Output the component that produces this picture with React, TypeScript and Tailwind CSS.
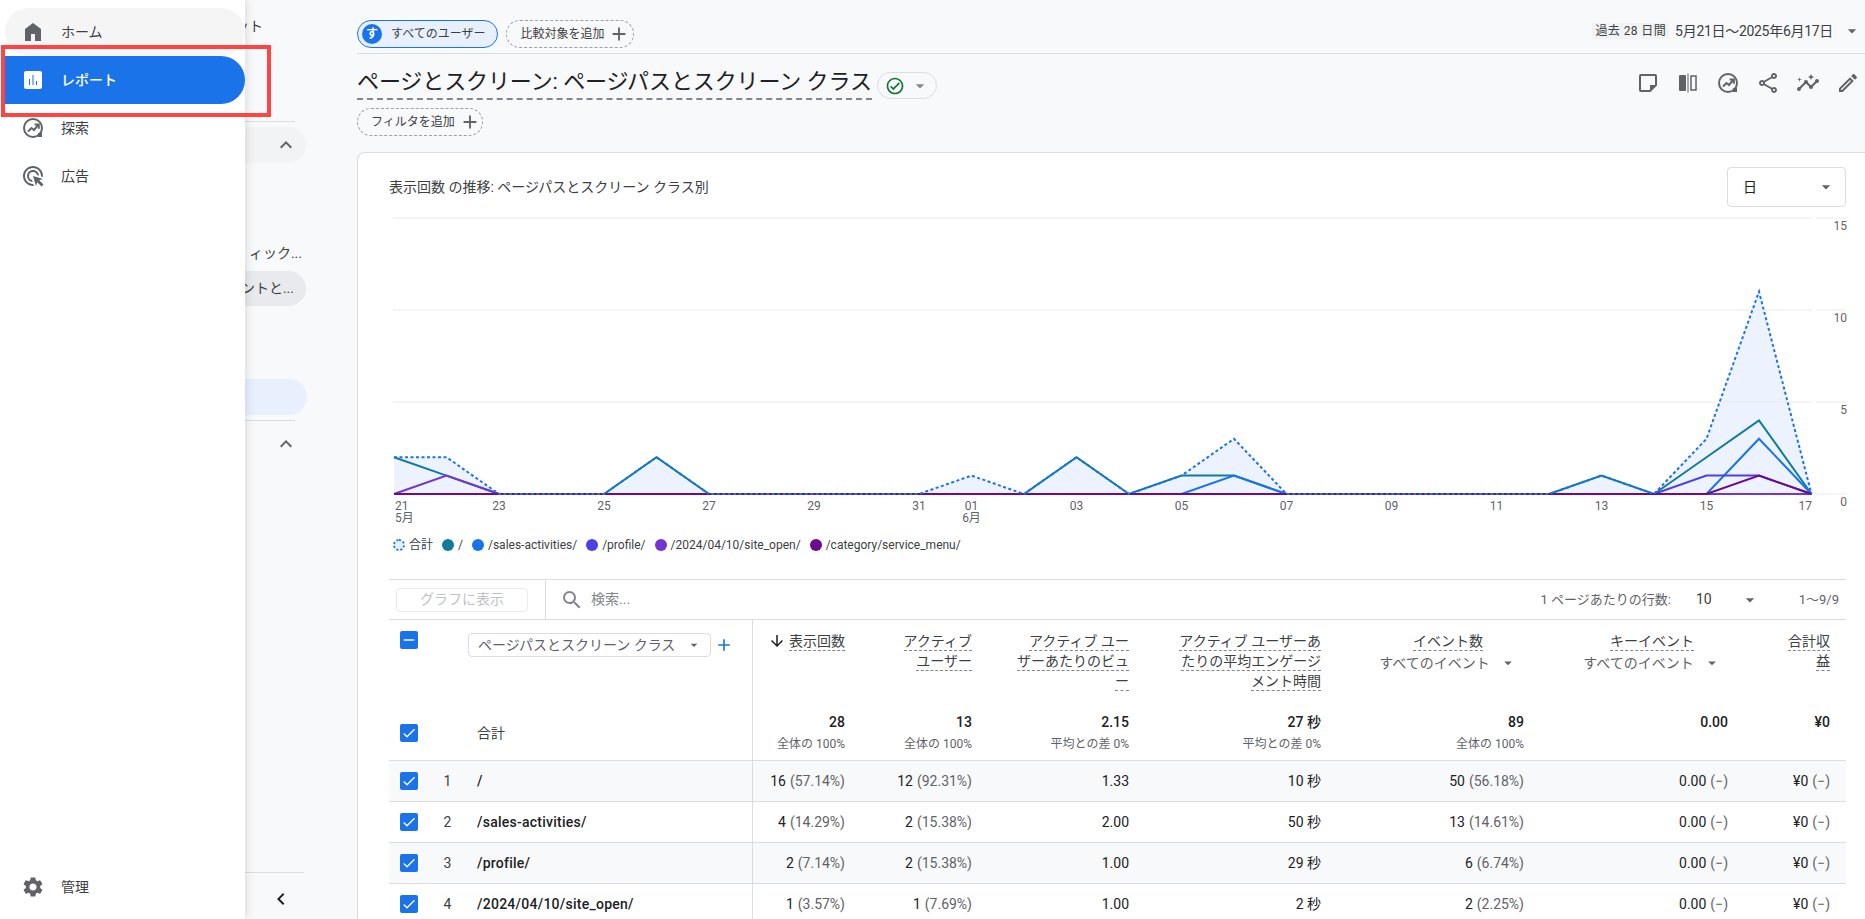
import React from "react";
import {
  MdAdd,
  MdAdsClick,
  MdArrowDownward,
  MdArrowDropDown,
  MdCheck,
  MdChevronLeft,
  MdExpandLess,
  MdOutlineCheckCircle,
  MdOutlineEdit,
  MdOutlineInsights,
  MdOutlineShare,
  MdRemove,
  MdSearch,
  MdSettings,
} from "react-icons/md";

function ExploreIcon({ color }: { color: string }) {
  return (
    <svg width="24" height="24" viewBox="0 0 24 24" fill="none">
      <circle cx="12" cy="12" r="9" stroke={color} strokeWidth="2" />
      <path d="M17 21h4v-4h-4z" fill={color} />
      <path d="M7 15.5l3.5-3.5 2.5 2 4-4.8" stroke={color} strokeWidth="2" />
      <path d="M13.6 8.6h4.2v4.2" stroke={color} strokeWidth="2" />
    </svg>
  );
}

function CompareIcon() {
  return (
    <svg width="24" height="24" viewBox="0 0 24 24" fill="none">
      <rect x="3" y="4" width="7" height="16" rx="1" fill="#5f6368" />
      <rect x="11.500" y="2.500" width="1" height="19" fill="#5f6368" />
      <rect x="15" y="5" width="5" height="14" stroke="#5f6368" strokeWidth="1.5" />
    </svg>
  );
}

function NoteIcon() {
  return (
    <svg width="24" height="24" viewBox="0 0 24 24" fill="none">
      <path
        d="M5 4h14a1 1 0 0 1 1 1v9l-6 6H5a1 1 0 0 1-1-1V5a1 1 0 0 1 1-1z"
        stroke="#5f6368"
        strokeWidth="2"
      />
      <path d="M14 14h6l-6 6z" fill="#5f6368" />
    </svg>
  );
}

function ReportIcon() {
  return (
    <svg width="24" height="24" viewBox="0 0 24 24">
      <path
        fill="#ffffff"
        fillRule="evenodd"
        d="M19 3H5c-1.100 0-2 .9-2 2v14c0 1.100.9 2 2 2h14c1.100 0 2-.9 2-2V5c0-1.100-.9-2-2-2zM9 17H8v-6h1v6zm3.500 0h-1V7h1v10zm3.500 0h-1v-4h1v4z"
      />
    </svg>
  );
}

function HomeIcon() {
  return (
    <svg width="24" height="24" viewBox="0 0 24 24">
      <path fill="#5f6368" d="M4 21V9l8-6 8 6v12h-6v-7h-4v7z" />
    </svg>
  );
}

function Checkbox({ minus }: { minus?: boolean }) {
  return (
    <div className="w-[18px] h-[18px] rounded-[2px] bg-[#1a73e8] flex items-center justify-center shrink-0">
      {minus ? <MdRemove size={18} color="#ffffff" /> : <MdCheck size={16} color="#ffffff" />}
    </div>
  );
}

const N = 28;
const pad = (m: Record<number, number>) => Array.from({ length: N }, (_, i) => m[i] ?? 0);
const X = (i: number) => 5 + 52.5 * i;
const Y = (v: number) => 282 - 18.4 * v;
const pts = (d: number[]) => d.map((v, i) => `${X(i)},${Y(v)}`).join(" ");

const total = pad({ 0: 2, 1: 2, 5: 2, 11: 1, 13: 2, 15: 1, 16: 3, 23: 1, 25: 3, 26: 11 });
const series: { color: string; data: number[] }[] = [
  { color: "#12799f", data: pad({ 0: 2, 1: 1, 5: 2, 13: 2, 15: 1, 16: 1, 23: 1, 25: 2, 26: 4 }) },
  { color: "#1a73e8", data: pad({ 16: 1, 26: 3 }) },
  { color: "#4b40e8", data: pad({ 25: 1, 26: 1 }) },
  { color: "#7434d2", data: pad({ 1: 1 }) },
  { color: "#6e0a90", data: pad({ 26: 1 }) },
];

const xLabels: [number, string][] = [
  [2, "23"],
  [4, "25"],
  [6, "27"],
  [8, "29"],
  [10, "31"],
  [11, "01"],
  [13, "03"],
  [15, "05"],
  [17, "07"],
  [19, "09"],
  [21, "11"],
  [23, "13"],
  [25, "15"],
];

function Chart() {
  const grid = [6, 98, 190, 282];
  const labels: [number, string][] = [
    [18, "15"],
    [110, "10"],
    [202, "5"],
    [294, "0"],
  ];
  const t = { fontSize: 12, fill: "#5f6368" };
  return (
    <svg width="1457" height="320" viewBox="0 0 1457 320" className="block overflow-visible">
      <polygon points={`${X(0)},${Y(0)} ${pts(total)} ${X(27)},${Y(0)}`} fill="#ecf3fe" />
      {grid.map((y) => (
        <g key={y}>
          <line x1="4" x2="1423" y1={y} y2={y} stroke="#e8eaed" />
          <line x1="1427" x2="1457" y1={y} y2={y} stroke="#e8eaed" />
        </g>
      ))}
      {series.map((s) => (
        <polyline key={s.color} points={pts(s.data)} fill="none" stroke={s.color} strokeWidth="2" />
      ))}
      <polyline points={pts(total)} fill="none" stroke="#1a73e8" strokeWidth="2" strokeDasharray="3 2.500" />
      {labels.map(([y, s]) => (
        <text key={s} x="1458" y={y} textAnchor="end" {...t}>
          {s}
        </text>
      ))}
      <text x="6" y="298" {...t}>21</text>
      <text x="6" y="310" {...t}>5月</text>
      {xLabels.map(([i, s]) => (
        <text key={s} x={X(i)} y="298" textAnchor="middle" {...t}>
          {s}
        </text>
      ))}
      <text x={X(11)} y="310" textAnchor="middle" {...t}>6月</text>
      <text x="1423" y="298" textAnchor="end" {...t}>17</text>
    </svg>
  );
}

const legend = [
  { c: "#12799f", t: "/" },
  { c: "#1a73e8", t: "/sales-activities/" },
  { c: "#4b40e8", t: "/profile/" },
  { c: "#7434d2", t: "/2024/04/10/site_open/" },
  { c: "#6e0a90", t: "/category/service_menu/" },
];

function HeadLine({ children }: { children: React.ReactNode }) {
  return (
    <span className="block h-[20px] leading-[20px] border-b border-dashed border-[#80868b] whitespace-nowrap text-[#3c4043]">
      {children}
    </span>
  );
}

function Val({ a, b }: { a: string; b?: string }) {
  return (
    <div className="pr-4 flex items-center justify-end whitespace-nowrap">
      <span className="text-[#202124]">{a}</span>
      {b && <span className="text-[#5f6368] ml-1">{b}</span>}
    </div>
  );
}

function Tot({ a, b }: { a: string; b?: string }) {
  return (
    <div className="pr-4 pt-[6px] flex flex-col items-end whitespace-nowrap">
      <span className="h-5 leading-5 font-medium text-[#202124]">{a}</span>
      {b && <span className="mt-1 h-4 leading-4 text-[12px] text-[#5f6368]">{b}</span>}
    </div>
  );
}

const rows = [
  ["1", "/", "16", "(57.14%)", "12", "(92.31%)", "1.33", "10 秒", "50", "(56.18%)"],
  ["2", "/sales-activities/", "4", "(14.29%)", "2", "(15.38%)", "2.00", "50 秒", "13", "(14.61%)"],
  ["3", "/profile/", "2", "(7.14%)", "2", "(15.38%)", "1.00", "29 秒", "6", "(6.74%)"],
  ["4", "/2024/04/10/site_open/", "1", "(3.57%)", "1", "(7.69%)", "1.00", "2 秒", "2", "(2.25%)"],
];

function NavItem({ icon, label, cls, labelCls }: { icon: React.ReactNode; label: string; cls?: string; labelCls?: string }) {
  return (
    <div className={`h-12 flex items-center pl-4 ${cls ?? ""}`}>
      <div className="w-6 h-6 shrink-0">{icon}</div>
      <span className={labelCls ?? "ml-4 text-[#3c4043]"}>{label}</span>
    </div>
  );
}

export default function App() {
  return (
    <div className="relative w-[1865px] h-[919px] overflow-hidden flex bg-[#f8f9fa] text-[14px] text-[#202124] [font-family:Roboto,'Noto_Sans_CJK_JP',sans-serif]">
      {/* primary navigation */}
      <aside className="relative z-10 w-[245px] shrink-0 bg-white pl-[5px] pt-2 pb-2 flex flex-col shadow-[2px_0_8px_rgba(60,64,67,0.15)]">
        <NavItem icon={<HomeIcon />} label="ホーム" cls="rounded-full bg-[#f5f5f5]" />
        <NavItem
          icon={<ReportIcon />}
          label="レポート"
          cls="rounded-r-full bg-[#1a73e8]"
          labelCls="ml-4 text-white font-medium"
        />
        <NavItem icon={<ExploreIcon color="#5f6368" />} label="探索" />
        <NavItem icon={<MdAdsClick size={24} color="#5f6368" />} label="広告" />
        <NavItem icon={<MdSettings size={24} color="#5f6368" />} label="管理" cls="mt-auto" />
      </aside>

      {/* secondary navigation, mostly covered */}
      <nav className="w-[112px] shrink-0 overflow-hidden flex flex-col text-[#3c4043]">
        <div className="mt-4 h-5 leading-5 flex justify-end pr-[94px] whitespace-nowrap">ット</div>
        <div className="mt-[85px] mr-[62px] h-px shrink-0 bg-[#dadce0]" />
        <div className="mt-[5px] mr-[51px] h-9 shrink-0 rounded-r-full bg-[#f1f3f4] flex items-center justify-end pr-2">
          <MdExpandLess size={24} color="#5f6368" />
        </div>
        <div className="mt-20 h-5 leading-5 flex justify-end pr-[55px] whitespace-nowrap">ィック...</div>
        <div className="mt-2 mr-[51px] h-[35px] shrink-0 rounded-r-full bg-[#e8eaed] flex items-center justify-end pr-3 whitespace-nowrap">
          ントと...
        </div>
        <div className="mt-[73px] mr-[50px] h-9 shrink-0 rounded-r-full bg-[#e8f0fe]" />
        <div className="mt-[5px] mr-[62px] h-px shrink-0 bg-[#dadce0]" />
        <div className="mt-[11px] flex justify-end pr-[59px]">
          <MdExpandLess size={24} color="#5f6368" />
        </div>
        <div className="mt-auto mr-[53px] h-px shrink-0 bg-[#dadce0]" />
        <div className="h-[46px] pt-[14px] flex justify-end pr-[64px]">
          <MdChevronLeft size={24} color="#202124" />
        </div>
      </nav>

      {/* main */}
      <main className="flex-1 min-w-0 flex flex-col">
        <div className="h-[54px] shrink-0 border-b border-[#dadce0] flex items-start pt-5">
          <div className="h-7 flex items-center rounded-full border border-[#1a73e8] bg-[#e8f0fe] pl-1 pr-3 text-[12px]">
            <span className="w-5 h-5 rounded-full bg-[#1a73e8] text-white font-bold flex items-center justify-center">す</span>
            <span className="ml-[9px] text-[#3c4043]">すべてのユーザー</span>
          </div>
          <div className="ml-2 h-7 flex items-center rounded-full border border-dashed border-[#9aa0a6] pl-[13px] pr-[3px] text-[12px]">
            <span className="text-[#3c4043]">比較対象を追加</span>
            <MdAdd size={22} color="#5f6368" className="ml-1" />
          </div>
          <div className="ml-auto mt-[-3px] flex items-center pr-[3px]">
            <span className="h-4 px-[3px] leading-4 bg-[#f1f3f4] text-[12px] text-[#3c4043] tracking-[0.4px] whitespace-nowrap">過去 28 日間</span>
            <span className="ml-[6px] h-7 leading-7 text-[#3c4043] tracking-[-0.3px] whitespace-nowrap">5月21日〜2025年6月17日</span>
            <MdArrowDropDown size={20} color="#5f6368" className="ml-[9px]" />
          </div>
        </div>

        <div className="mt-3 h-[34px] shrink-0 flex items-center">
          <h1 className="h-[34px] leading-[32px] text-[22px] font-normal text-[#202124] tracking-[-0.1px] border-b-2 border-dashed border-[#80868b] whitespace-nowrap">
            ページとスクリーン: ページパスとスクリーン クラス
          </h1>
          <div className="ml-[5px] mt-[5px] w-[60px] h-[27px] rounded-full border border-[#dadce0] flex items-center pl-[7px]">
            <MdOutlineCheckCircle size={20} color="#137333" />
            <MdArrowDropDown size={20} color="#80868b" className="ml-[5px]" />
          </div>
          <div className="ml-auto flex items-center gap-4 pr-[5px]">
            <NoteIcon />
            <CompareIcon />
            <ExploreIcon color="#5f6368" />
            <MdOutlineShare size={24} color="#5f6368" />
            <MdOutlineInsights size={24} color="#5f6368" />
            <MdOutlineEdit size={24} color="#5f6368" />
          </div>
        </div>

        <div className="mt-2 w-[126px] h-7 shrink-0 flex items-center rounded-full border border-dashed border-[#9aa0a6] pl-[13px] text-[12px]">
          <span className="text-[#3c4043]">フィルタを追加</span>
          <MdAdd size={22} color="#5f6368" className="ml-1" />
        </div>

        {/* card */}
        <section className="mt-4 flex-1 min-h-0 overflow-hidden bg-white border-t border-l border-[#dadce0] rounded-tl-lg pl-[31px] pr-[19px] pt-[14px]">
          <div className="h-10 flex items-center justify-between">
            <h2 className="text-[14px] font-normal text-[#3c4043]">表示回数 の推移: ページパスとスクリーン クラス別</h2>
            <div className="w-[119px] h-10 rounded border border-[#dadce0] flex items-center justify-between pl-[15px] pr-[9px]">
              <span>日</span>
              <MdArrowDropDown size={20} color="#5f6368" />
            </div>
          </div>

          <div className="mt-[5px]">
            <Chart />
          </div>

          <div className="h-[26px] pl-1 flex items-center text-[12px] text-[#3c4043]">
            <span className="w-3 h-3 rounded-full border-2 border-dotted border-[#1a73e8] bg-[#e8f0fe]" />
            <span className="ml-1">合計</span>
            {legend.map((l) => (
              <div key={l.t} className="ml-[9px] flex items-center">
                <span className="w-3 h-3 rounded-full" style={{ backgroundColor: l.c }} />
                <span className="ml-1 whitespace-nowrap">{l.t}</span>
              </div>
            ))}
          </div>

          {/* table toolbar */}
          <div className="mt-[21px] h-[41px] border-y border-[#dadce0] flex items-center">
            <div className="ml-[7px] w-[132px] h-6 rounded border border-[#e8eaed] text-[#bdc1c6] flex items-center justify-center">グラフに表示</div>
            <div className="ml-[17px] w-px h-full bg-[#dadce0]" />
            <MdSearch size={24} color="#80868b" className="ml-[14px]" />
            <span className="ml-[7px] text-[#80868b]">検索...</span>
            <div className="ml-auto flex items-center pr-[7px] text-[#5f6368]">
              <span className="text-[13px] whitespace-nowrap">1 ページあたりの行数:</span>
              <span className="ml-[25px] text-[#3c4043]">10</span>
              <MdArrowDropDown size={20} color="#5f6368" className="ml-[28px]" />
              <span className="ml-[39px] text-[13px] whitespace-nowrap">1〜9/9</span>
            </div>
          </div>

          {/* table */}
          <div className="grid grid-cols-[364px_108px_127px_157px_192px_203px_204px_102px] h-[86px]">
            <div className="border-r border-[#dadce0] pl-[11px] pt-[11px] flex items-start">
              <Checkbox minus />
              <div className="ml-[50px] mt-[2px] w-[243px] h-6 rounded border border-[#dadce0] flex items-center justify-between pl-[9px] pr-2 text-[#5f6368] whitespace-nowrap">
                <span>ページパスとスクリーン クラス</span>
                <MdArrowDropDown size={16} color="#5f6368" />
              </div>
              <MdAdd size={20} color="#1a73e8" className="ml-[3px] mt-[4px]" />
            </div>
            <div className="pr-4 pt-[11px] flex justify-end items-start">
              <MdArrowDownward size={18} color="#202124" className="mt-[1px] mr-[3px]" />
              <HeadLine>表示回数</HeadLine>
            </div>
            <div className="pr-4 pt-[11px] flex flex-col items-end">
              <HeadLine>アクティブ</HeadLine>
              <HeadLine>ユーザー</HeadLine>
            </div>
            <div className="pr-4 pt-[11px] flex flex-col items-end">
              <HeadLine>アクティブ ユー</HeadLine>
              <HeadLine>ザーあたりのビュ</HeadLine>
              <HeadLine>ー</HeadLine>
            </div>
            <div className="pr-4 pt-[11px] flex flex-col items-end">
              <HeadLine>アクティブ ユーザーあ</HeadLine>
              <HeadLine>たりの平均エンゲージ</HeadLine>
              <HeadLine>メント時間</HeadLine>
            </div>
            <div className="pr-5 pt-[11px] flex justify-end">
              <div className="flex flex-col items-center w-[144px]">
                <HeadLine>イベント数</HeadLine>
                <div className="h-6 flex items-center text-[#5f6368] whitespace-nowrap">
                  すべてのイベント
                  <MdArrowDropDown size={18} color="#5f6368" className="ml-[9px]" />
                </div>
              </div>
            </div>
            <div className="pr-5 pt-[11px] flex justify-end">
              <div className="flex flex-col items-center w-[144px]">
                <HeadLine>キーイベント</HeadLine>
                <div className="h-6 flex items-center text-[#5f6368] whitespace-nowrap">
                  すべてのイベント
                  <MdArrowDropDown size={18} color="#5f6368" className="ml-[9px]" />
                </div>
              </div>
            </div>
            <div className="pr-4 pt-[11px] flex flex-col items-end">
              <HeadLine>合計収</HeadLine>
              <HeadLine>益</HeadLine>
            </div>
          </div>

          <div className="grid grid-cols-[364px_108px_127px_157px_192px_203px_204px_102px] h-[55px] border-b border-[#dadce0]">
            <div className="border-r border-[#dadce0] pl-[11px] flex items-center">
              <Checkbox />
              <span className="ml-[59px] text-[#3c4043]">合計</span>
            </div>
            <Tot a="28" b="全体の 100%" />
            <Tot a="13" b="全体の 100%" />
            <Tot a="2.15" b="平均との差 0%" />
            <Tot a="27 秒" b="平均との差 0%" />
            <Tot a="89" b="全体の 100%" />
            <Tot a="0.00" />
            <Tot a="¥0" />
          </div>

          {rows.map((r, i) => (
            <div
              key={r[0]}
              className={`grid grid-cols-[364px_108px_127px_157px_192px_203px_204px_102px] h-[41px] border-b border-[#dadce0] ${
                i % 2 === 0 ? "bg-[#f8f9fa]" : "bg-white"
              }`}
            >
              <div className="border-r border-[#dadce0] pl-[11px] flex items-center">
                <Checkbox />
                <span className="w-[59px] text-center text-[#3c4043]">{r[0]}</span>
                <span className="text-[#202124] font-medium tracking-[0.25px] whitespace-nowrap">{r[1]}</span>
              </div>
              <Val a={r[2]} b={r[3]} />
              <Val a={r[4]} b={r[5]} />
              <Val a={r[6]} />
              <Val a={r[7]} />
              <Val a={r[8]} b={r[9]} />
              <Val a="0.00" b="(−)" />
              <Val a="¥0" b="(−)" />
            </div>
          ))}
        </section>
      </main>

      {/* annotation drawn on the screenshot */}
      <div className="absolute left-[1px] top-[45px] w-[270px] h-[72px] border-4 border-[#ff4444] z-20 pointer-events-none" />
    </div>
  );
}
